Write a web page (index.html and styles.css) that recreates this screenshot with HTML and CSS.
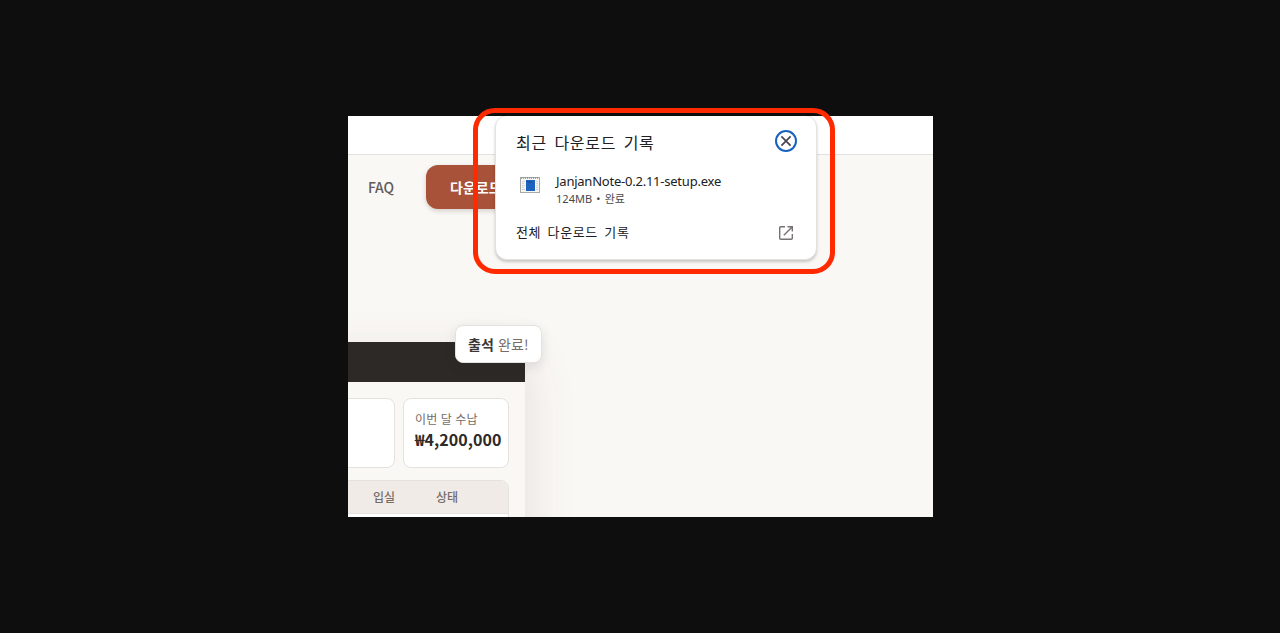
FILE: index.html
```html
<!DOCTYPE html>
<html lang="ko">
<head>
  <meta charset="UTF-8">
  <title>JanjanNote 다운로드</title>
  <meta name="viewport" content="width=device-width, initial-scale=1.0" />
  <link rel="stylesheet" href="styles.css">
</head>
<body>

  <div class="stage">
    <div class="screen">
      <div class="toolbar"></div>

      <nav class="nav">
        <a class="nav-link">FAQ</a>
        <a class="nav-button">다운로드</a>
      </nav>

      <div class="app-window">
        <div class="app-header"></div>
        <div class="app-body">
          <div class="stats">
            <div class="stat"></div>
            <div class="stat">
              <div class="stat-label">이번 달 수납</div>
              <div class="stat-value">₩4,200,000</div>
            </div>
          </div>
          <div class="table">
            <div class="table-head">
              <span>입실</span>
              <span>상태</span>
            </div>
          </div>
        </div>
        <div class="toast"><b>출석</b> 완료!</div>
      </div>

      <div class="downloads">
        <div class="downloads-header">
          <h2>최근 다운로드 기록</h2>
          <svg class="close-icon" width="22" height="22" viewBox="0 0 22 22" fill="none">
            <circle cx="11" cy="11" r="10" stroke="#1862bf" stroke-width="2"/>
            <path d="M6.4 6.4l9.2 9.2M15.6 6.4l-9.2 9.2" stroke="#47444e" stroke-width="1.7"/>
          </svg>
        </div>
        <div class="download-item">
          <svg class="file-icon" width="20" height="16" viewBox="0 0 20 16">
            <rect x=".5" y=".5" width="19" height="15" fill="#f5f5f3" stroke="#a9a9a9"/>
            <path d="M1 1h18" stroke="#8b8b8b" stroke-width="1.5" stroke-dasharray="1 1"/>
            <path d="M2 4.5h3M2 6.5h2M2 8.5h3M2 10.5h2M2 12.5h3M16 4.5h2M16 6.5h2M16 8.5h2M16 10.5h2M16 12.5h2" stroke="#d5d5d5"/>
            <rect x="6" y="3" width="9" height="11" fill="#1d62be"/>
            <path d="M7 4.5h1M9 4.5h1M11 4.5h1M8 5.5h1M10 5.5h1" stroke="#174a91"/>
          </svg>
          <div>
            <div class="file-name">JanjanNote-0.2.11-setup.exe</div>
            <div class="file-meta">124MB • 완료</div>
          </div>
        </div>
        <div class="downloads-footer">
          <span>전체 다운로드 기록</span>
          <svg class="open-icon" width="14" height="14" viewBox="0 0 14 14" fill="none" stroke="#777075" stroke-width="1.4">
            <path d="M6 .7H1.7a1 1 0 0 0-1 1v10.6a1 1 0 0 0 1 1h10.6a1 1 0 0 0 1-1V8"/>
            <path d="M8.5.7h4.8v4.8M13.1.9L4.8 9.2"/>
          </svg>
        </div>
      </div>
    </div>

    <div class="highlight"></div>
  </div>

</body>
</html>
```

FILE: styles.css
```css
:root {
  --dark: #0e0e0e;
  --paper: #faf8f5;
  --line: #e5e2de;
  --brand: #a8523a;
  --font-main: "Noto Sans CJK KR", sans-serif;
  --font-ui: "Noto Sans", "Noto Sans CJK KR", sans-serif;
}

* {
  box-sizing: border-box;
}

body {
  margin: 0;
  height: 633px;
  padding: 116px 0 0 348px;
  background: var(--dark);
  font-family: var(--font-main);
  overflow: hidden;
}

.stage {
  position: relative;
  width: 585px;
  height: 401px;
}

.screen {
  position: relative;
  height: 100%;
  background: var(--paper);
  overflow: hidden;
}

.toolbar {
  height: 39px;
  background: #fff;
  border-bottom: 1px solid #e2e1df;
}

.nav {
  display: flex;
  align-items: center;
  gap: 32px;
  padding: 10px 0 0 20px;
}

.nav-link {
  width: 26px;
  color: #625b5b;
  font-size: 14px;
  font-weight: 500;
  letter-spacing: -0.2px;
  line-height: 44px;
}

.nav-button {
  height: 44px;
  padding: 0 24px;
  border-radius: 12px;
  background: var(--brand);
  box-shadow: 0 2px 5px rgba(60, 40, 30, 0.2);
  color: #fff;
  font-size: 14px;
  font-weight: 700;
  line-height: 44px;
}

.app-window {
  position: relative;
  width: 238px;
  height: 260px;
  margin: 133px 0 0 -61px;
  background: var(--paper);
  box-shadow: 0 16px 48px rgba(70, 45, 35, 0.13);
}

.app-header {
  height: 40px;
  background: #2d2926;
}

.app-body {
  padding: 16px;
}

.stats {
  display: grid;
  grid-template-columns: 92px 106px;
  gap: 8px;
}

.stat {
  height: 70px;
  padding: 11px 0 0 11px;
  border: 1px solid var(--line);
  border-radius: 8px;
  background: #fff;
  white-space: nowrap;
}

.stat-label {
  color: #756d68;
  font-size: 12px;
  letter-spacing: 0.1px;
  line-height: 18px;
}

.stat-value {
  color: #2d2926;
  font-size: 16px;
  font-weight: 700;
  letter-spacing: 0.05px;
  line-height: 23px;
}

.table {
  height: 120px;
  margin-top: 12px;
  border: 1px solid var(--line);
  border-radius: 8px;
  background: #fff;
  overflow: hidden;
}

.table-head {
  display: grid;
  grid-template-columns: 63px 63px;
  height: 33px;
  padding-left: 69px;
  border-bottom: 1px solid var(--line);
  background: #f0ebe6;
  color: #756d68;
  font-size: 12px;
  font-weight: 500;
  line-height: 32px;
}

.toast {
  position: absolute;
  top: -17px;
  right: -17px;
  width: 87px;
  height: 38px;
  padding-left: 12px;
  border: 1px solid var(--line);
  border-radius: 8px;
  background: #fff;
  box-shadow: 0 4px 12px rgba(45, 41, 38, 0.12);
  color: #756d68;
  font-size: 14px;
  letter-spacing: 0.1px;
  line-height: 37px;
  white-space: nowrap;
}

.toast b {
  color: #3b3737;
  font-weight: 700;
}

/* browser download popup */
.downloads {
  position: absolute;
  top: -1px;
  left: 147px;
  width: 322px;
  height: 145px;
  padding: 14px 20px 0;
  border: 1px solid #e5e3e1;
  border-radius: 12px;
  background: #fff;
  box-shadow: 0 2px 3px rgba(0, 0, 0, 0.2);
  color: #202124;
  font-family: var(--font-ui);
}

.downloads-header,
.downloads-footer {
  display: flex;
  justify-content: space-between;
  align-items: center;
}

.downloads-header {
  height: 22px;
}

.downloads-header h2 {
  margin: 3px 0 0;
  font-size: 16px;
  font-weight: 400;
  letter-spacing: 0.7px;
  line-height: 22px;
  word-spacing: 2.7px;
}

.close-icon {
  margin-right: -1px;
}

.download-item {
  display: flex;
  gap: 16px;
  padding: 20px 0 0 4px;
}

.file-icon {
  margin-top: 5px;
}

.file-name {
  font-size: 13px;
  letter-spacing: -0.23px;
  line-height: 18px;
}

.file-meta {
  color: #47484d;
  font-size: 11px;
  letter-spacing: 0.05px;
  line-height: 17px;
  word-spacing: 1.2px;
}

.downloads-footer {
  height: 20px;
  margin-top: 16px;
  padding-right: 3px;
  font-size: 13px;
  letter-spacing: 0.6px;
  line-height: 18px;
  word-spacing: 2.5px;
}

.downloads-footer span {
  margin-top: -2px;
}

/* red marker around the popup */
.highlight {
  position: absolute;
  top: -8px;
  left: 125px;
  width: 362px;
  height: 166px;
  border: 5px solid #ff2a00;
  border-radius: 22px;
}
```
